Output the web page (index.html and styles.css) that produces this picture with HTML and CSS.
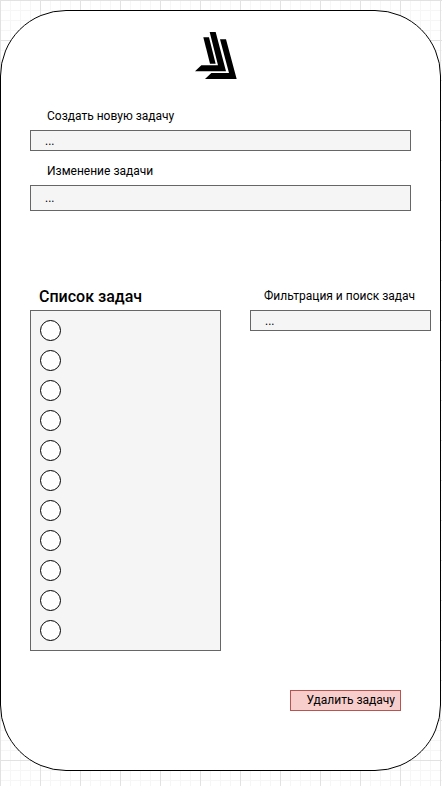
FILE: index.html
```html
<!DOCTYPE html>
<html lang="ru">
<head>
<meta charset="utf-8">
<meta name="viewport" content="width=device-width, initial-scale=1">
<title>Список задач</title>
<link rel="stylesheet" href="styles.css">
</head>
<body>
<main class="phone">
  <header class="header">
    <svg class="logo" viewBox="45 33 126 147" aria-hidden="true">
      <path d="M70 52H87L107 131H90Z"/>
      <path d="M89 36H107L138 154H45L64 136H114Z"/>
      <path d="M120 58H138L170 177H75L94 159H147Z"/>
    </svg>
  </header>
  <form class="editor">
    <label class="label" for="create">Создать новую задачу</label>
    <input class="field" id="create" type="text" placeholder="...">
    <label class="label label-next" for="edit">Изменение задачи</label>
    <input class="field field-tall" id="edit" type="text" placeholder="...">
  </form>
  <div class="columns">
    <section>
      <h1 class="title">Список задач</h1>
      <ul class="tasks">
        <li><input class="check" type="checkbox" aria-label="1"></li>
        <li><input class="check" type="checkbox" aria-label="2"></li>
        <li><input class="check" type="checkbox" aria-label="3"></li>
        <li><input class="check" type="checkbox" aria-label="4"></li>
        <li><input class="check" type="checkbox" aria-label="5"></li>
        <li><input class="check" type="checkbox" aria-label="6"></li>
        <li><input class="check" type="checkbox" aria-label="7"></li>
        <li><input class="check" type="checkbox" aria-label="8"></li>
        <li><input class="check" type="checkbox" aria-label="9"></li>
        <li><input class="check" type="checkbox" aria-label="10"></li>
        <li><input class="check" type="checkbox" aria-label="11"></li>
      </ul>
    </section>
    <section>
      <label class="label" for="search">Фильтрация и поиск задач</label>
      <input class="field" id="search" type="text" placeholder="...">
    </section>
  </div>
  <footer class="footer">
    <button class="delete" type="button">Удалить задачу</button>
  </footer>
</main>
</body>
</html>
```
FILE: styles.css
```css
* {
  box-sizing: border-box;
}

body {
  margin: 0;
  padding: 10px 1px 15px 0;
  font-family: "Comic Sans MS", Roboto, sans-serif;
  font-size: 12px;
  color: #000;
  background-color: #fff;
  background-image:
    linear-gradient(to right, #e2e2e2 1px, transparent 1px),
    linear-gradient(to bottom, #e2e2e2 1px, transparent 1px),
    linear-gradient(to right, #f6f6f6 1px, transparent 1px),
    linear-gradient(to bottom, #f6f6f6 1px, transparent 1px);
  background-size: 40px 40px, 40px 40px, 10px 10px, 10px 10px;
}

.phone {
  padding: 20px 0 59px 29px;
  border: 1px solid #000;
  border-radius: 66px;
  background: #fff;
}

.header {
  display: flex;
  justify-content: center;
  padding-right: 38px;
}

.logo {
  display: block;
  width: 42px;
  height: 49px;
}

.editor {
  display: flex;
  flex-direction: column;
  margin: 26px 29px 0 0;
}

.label {
  display: block;
  height: 24px;
  padding-left: 14px;
  line-height: 20px;
  white-space: nowrap;
}

.editor .label {
  padding-left: 17px;
}

.label-next {
  margin-top: 10px;
}

.field {
  display: block;
  width: 100%;
  height: 21px;
  padding: 0 14px;
  border: 1px solid #666;
  border-radius: 0;
  background: #f5f5f5;
  font: inherit;
  color: inherit;
}

.field-tall {
  height: 26px;
}

.field::placeholder {
  color: #000;
  opacity: 1;
}

.columns {
  display: grid;
  grid-template-columns: 191fr 181fr;
  align-items: start;
  gap: 29px;
  margin: 75px 9px 0 0;
}

.title {
  height: 24px;
  margin: 0;
  padding-left: 9px;
  font-size: 16px;
  font-weight: 500;
  line-height: 22px;
}

.tasks {
  display: grid;
  gap: 9px;
  margin: 0;
  padding: 9px;
  border: 1px solid #666;
  background: #f5f5f5;
  list-style: none;
}

.check {
  display: block;
  width: 21px;
  height: 21px;
  margin: 0;
  appearance: none;
  border: 1px solid #000;
  border-radius: 50%;
  background: #fff;
}

.check:checked {
  background: #000;
}

.footer {
  display: flex;
  justify-content: flex-end;
  margin: 39px 39px 0 0;
}

.delete {
  height: 21px;
  padding: 0 5px 0 15px;
  border: 1px solid #b85450;
  background: #f8cecc;
  font: inherit;
  line-height: 19px;
  color: inherit;
}
```
